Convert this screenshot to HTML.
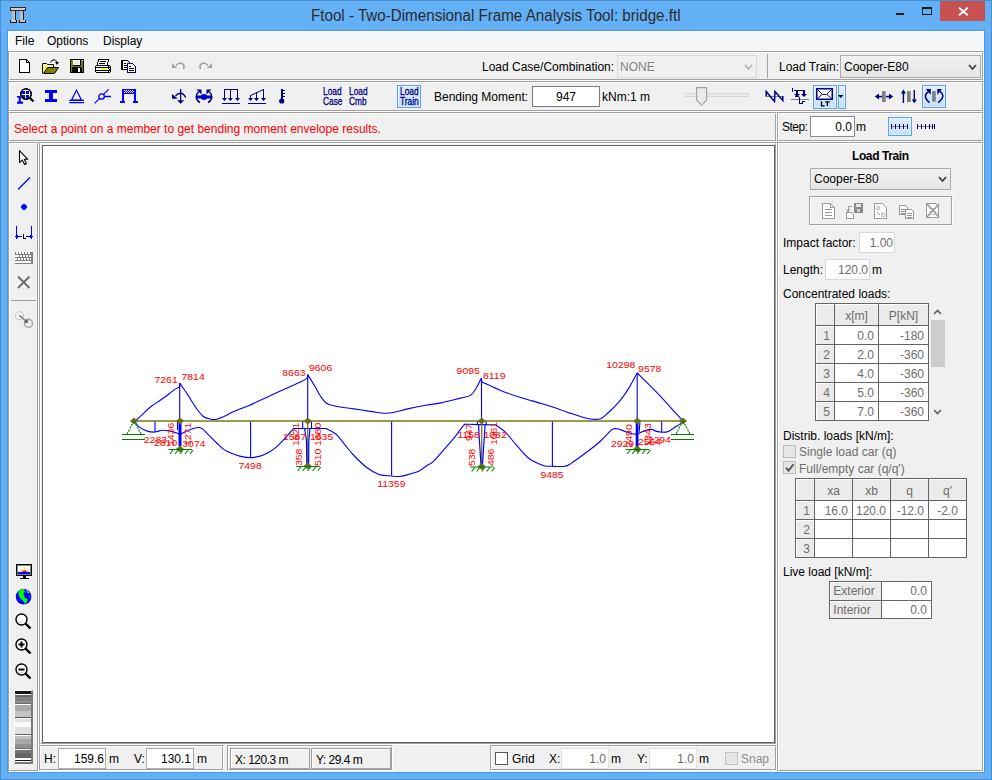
<!DOCTYPE html>
<html><head><meta charset="utf-8">
<style>
*{margin:0;padding:0;box-sizing:border-box}
html,body{width:992px;height:780px;overflow:hidden;background:#64b0f7;font-family:"Liberation Sans",sans-serif;font-size:12px;color:#000}
.a{position:absolute}
.t{position:absolute;white-space:nowrap;line-height:14px}
.e{position:absolute;border-style:solid;border-width:1px;border-color:#a0a0a0 #fff #fff #a0a0a0}
.e>i{position:absolute;left:0;top:0;right:0;bottom:0;border-style:solid;border-width:1px;border-color:#fff #a0a0a0 #a0a0a0 #fff}
.inp{position:absolute;background:#fff;border:1px solid #abadb3;text-align:right;padding-right:3px;line-height:18px}
.dis{color:#8a8a8a}
</style></head><body>
<!-- window frame -->
<div class="a" style="left:0;top:0;width:992px;height:780px;border:1px solid #4b8fd0"></div>
<!-- title -->
<div class="t" style="left:311px;top:7px;font-size:16px;line-height:18px;color:#2b2b2b;transform:scaleX(0.948);transform-origin:0 0">Ftool - Two-Dimensional Frame Analysis Tool: bridge.ftl</div>
<div class="a" style="left:940px;top:1px;width:45px;height:20px;background:#c75050"></div>
<div class="a" style="left:896px;top:13px;width:8px;height:2px;background:#1a1a1a"></div>
<div class="a" style="left:922px;top:7px;width:10px;height:8px;border:1px solid #1a1a1a;border-top-width:2px"></div>
<svg class="a" style="left:958px;top:7px" width="11" height="9"><path d="M1 0.8L9.8 8.2M9.8 0.8L1 8.2" stroke="#fff" stroke-width="1.9"/></svg>

<!-- client area -->
<div class="a" style="left:7px;top:30px;width:978px;height:743px;border:1px solid #5099e0"></div>
<div class="a" style="left:8px;top:31px;width:976px;height:741px;background:#f0f0f0"></div>
<div class="a" style="left:8px;top:31px;width:976px;height:20px;background:#f5f6f7;box-shadow:inset 1px 1px 0 #fff"></div>
<div class="t" style="left:15px;top:34px">File</div>
<div class="t" style="left:47px;top:34px">Options</div>
<div class="t" style="left:103px;top:34px">Display</div>

<!-- panels -->
<div class="e" style="left:8px;top:51px;width:976px;height:30px"><i></i></div>
<div class="e" style="left:8px;top:81px;width:976px;height:31px"><i></i></div>
<div class="e" style="left:8px;top:112px;width:769px;height:30px"><i></i></div>
<div class="e" style="left:777px;top:112px;width:207px;height:30px"><i></i></div>
<div class="e" style="left:8px;top:142px;width:31px;height:630px"><i></i></div>
<div class="e" style="left:39px;top:142px;width:738px;height:603px"><i></i></div>
<div class="e" style="left:39px;top:745px;width:185px;height:26px"><i></i></div>
<div class="e" style="left:227px;top:745px;width:166px;height:26px"><i></i></div>
<div class="e" style="left:490px;top:745px;width:287px;height:26px"><i></i></div>
<div class="e" style="left:777px;top:142px;width:207px;height:630px"><i></i></div>

<!-- canvas -->
<div class="a" style="left:42px;top:145px;width:733px;height:598px;background:#fff;border:1px solid #646464"></div>

<!-- diagram -->
<svg class="a" style="left:0;top:0" width="992" height="780"><path d="M134 421C134.30 420.90 134.48 421.42 135.8 420.4C137.12 419.38 139.47 417.13 141.9 414.9C144.33 412.67 147.35 409.43 150.4 407C153.45 404.57 157.15 402.43 160.2 400.3C163.25 398.17 166.27 396.02 168.7 394.2C171.13 392.38 172.97 390.62 174.8 389.4C176.63 388.18 178.88 387.32 179.7 386.9C179.70 386.30 179.70 383.90 179.7 383.3C179.88 383.52 179.47 382.72 180.8 384.6C182.13 386.48 185.27 390.88 187.7 394.6C190.13 398.32 192.85 403.30 195.4 406.9C197.95 410.50 200.43 414.15 203 416.2C205.57 418.25 208.48 418.70 210.8 419.2C213.12 419.70 214.33 419.83 216.9 419.2C219.47 418.57 223.38 416.68 226.2 415.4C229.02 414.12 229.97 413.17 233.8 411.5C237.63 409.83 243.30 407.95 249.2 405.4C255.10 402.85 262.78 399.15 269.2 396.2C275.62 393.25 282.32 390.15 287.7 387.7C293.08 385.25 298.17 383.17 301.5 381.5C304.83 379.83 306.67 378.33 307.7 377.7C307.70 377.18 307.70 375.12 307.7 374.6C308.82 376.42 312.25 381.88 314.4 385.5C316.55 389.12 318.52 393.30 320.6 396.3C322.68 399.30 324.35 401.85 326.9 403.5C329.45 405.15 331.40 405.30 335.9 406.2C340.40 407.10 347.92 408.00 353.9 408.9C359.88 409.80 366.72 410.87 371.8 411.6C376.88 412.33 380.80 413.15 384.4 413.3C388.00 413.45 389.52 413.23 393.4 412.5C397.28 411.77 402.32 410.10 407.7 408.9C413.08 407.70 420.32 406.27 425.7 405.3C431.08 404.33 436.88 403.65 440 403.1C443.12 402.55 440.98 402.83 444.4 402C447.82 401.17 456.17 399.20 460.5 398.1C464.83 397.00 467.70 397.20 470.4 395.4C473.10 393.60 474.90 390.15 476.7 387.3C478.50 384.45 480.45 379.80 481.2 378.3C481.33 378.92 481.87 381.38 482 382C485.30 383.48 495.50 388.37 501.8 390.9C508.10 393.43 513.22 395.10 519.8 397.2C526.38 399.30 535.32 401.70 541.3 403.5C547.28 405.30 550.92 406.37 555.7 408C560.48 409.63 567.48 412.42 570 413.3C572.52 414.18 567.68 412.40 570.8 413.3C573.92 414.20 583.77 417.80 588.7 418.7C593.63 419.60 597.10 419.73 600.4 418.7C603.70 417.67 605.37 415.33 608.5 412.5C611.63 409.67 615.92 405.60 619.2 401.7C622.48 397.80 625.20 393.88 628.2 389.1C631.20 384.32 635.70 375.68 637.2 373C640.50 376.28 650.42 385.83 657 392.7C663.58 399.57 672.37 409.48 676.7 414.2C681.03 418.92 681.95 419.87 683 421" fill="none" stroke="#0000ff" stroke-width="1.1" stroke-linejoin="round"/>
<path d="M134 421C134.92 422.02 137.17 425.37 139.5 427.1C141.83 428.83 145.37 430.58 148 431.4C150.63 432.22 152.87 432.20 155.3 432C157.73 431.80 159.95 430.30 162.6 430.2C165.25 430.10 168.77 430.90 171.2 431.4C173.63 431.90 175.73 432.68 177.2 433.2C178.67 433.72 179.53 434.28 180 434.5" fill="none" stroke="#0000ff" stroke-width="1.1" stroke-linejoin="round"/>
<path d="M180.8 433.9C182.08 433.30 186.28 431.25 188.5 430.3C190.72 429.35 192.35 428.67 194.1 428.2C195.85 427.73 197.58 427.38 199 427.5C200.42 427.62 201.07 427.72 202.6 428.9C204.13 430.08 205.85 432.25 208.2 434.6C210.55 436.95 214.12 440.53 216.7 443C219.28 445.47 221.12 447.63 223.7 449.4C226.28 451.17 229.37 452.43 232.2 453.6C235.03 454.77 237.63 455.73 240.7 456.4C243.77 457.07 247.55 457.60 250.6 457.6C253.65 457.60 256.18 457.18 259 456.4C261.82 455.62 264.67 454.42 267.5 452.9C270.33 451.38 273.18 449.65 276 447.3C278.82 444.95 281.48 441.93 284.4 438.8C287.32 435.67 291.98 430.22 293.5 428.5C298.92 428.50 320.58 428.50 326 428.5C327.65 429.42 332.75 431.28 335.9 434C339.05 436.72 341.90 441.22 344.9 444.8C347.90 448.38 350.32 451.77 353.9 455.5C357.48 459.23 362.22 464.05 366.4 467.2C370.58 470.35 374.85 472.93 379 474.4C383.15 475.87 387.97 475.65 391.3 476C394.63 476.35 396.52 476.65 399 476.5C401.48 476.35 402.77 476.07 406.2 475.1C409.63 474.13 416.32 472.18 419.6 470.7C422.88 469.22 423.50 467.85 425.9 466.2C428.30 464.55 430.27 464.40 434 460.8C437.73 457.20 444.87 448.50 448.3 444.6C451.73 440.70 452.05 440.62 454.6 437.4C457.15 434.18 461.62 427.48 463.6 425.3C465.58 423.12 466.02 424.47 466.5 424.3C471.38 424.42 490.92 424.88 495.8 425C497.40 426.20 502.00 428.90 505.4 432.2C508.80 435.50 512.32 440.47 516.2 444.8C520.08 449.13 524.22 454.77 528.7 458.2C533.18 461.63 539.22 464.05 543.1 465.4C546.98 466.75 548.42 466.15 552 466.3C555.58 466.45 561.47 466.75 564.6 466.3C567.73 465.85 566.48 466.43 570.8 463.6C575.12 460.77 585.63 452.98 590.5 449.3C595.37 445.62 597.08 444.15 600 441.5C602.92 438.85 605.85 435.48 608 433.4C610.15 431.32 611.15 429.73 612.9 429C614.65 428.27 616.48 428.60 618.5 429C620.52 429.40 622.70 430.60 625 431.4C627.30 432.20 630.30 433.33 632.3 433.8C634.30 434.27 636.22 434.13 637 434.2C637.28 434.07 638.42 433.53 638.7 433.4C639.78 432.93 643.05 431.27 645.2 430.6C647.35 429.93 649.72 429.27 651.6 429.4C653.48 429.53 654.77 430.93 656.5 431.4C658.23 431.87 660.00 432.20 662 432.2C664.00 432.20 666.47 432.15 668.5 431.4C670.53 430.65 672.32 428.92 674.2 427.7C676.08 426.48 678.33 425.15 679.8 424.1C681.27 423.05 682.47 421.85 683 421.4" fill="none" stroke="#0000ff" stroke-width="1.1" stroke-linejoin="round"/>
<line x1="155" y1="421" x2="155" y2="432" stroke="#0000ff" stroke-width="1.1"/>
<line x1="250.6" y1="421" x2="250.6" y2="457" stroke="#0000ff" stroke-width="1.1"/>
<line x1="391.6" y1="421" x2="391.6" y2="475.6" stroke="#0000ff" stroke-width="1.1"/>
<line x1="552.4" y1="421" x2="552.4" y2="466.3" stroke="#0000ff" stroke-width="1.1"/>
<line x1="661.7" y1="421" x2="661.7" y2="432" stroke="#0000ff" stroke-width="1.1"/>
<line x1="179.7" y1="383.3" x2="179.7" y2="421" stroke="#0000ff" stroke-width="1.1"/>
<line x1="307.7" y1="374.6" x2="307.7" y2="421" stroke="#0000ff" stroke-width="1.1"/>
<line x1="481.5" y1="378.3" x2="481.5" y2="421" stroke="#0000ff" stroke-width="1.1"/>
<line x1="637.2" y1="373" x2="637.2" y2="421" stroke="#0000ff" stroke-width="1.1"/>
<line x1="177.5" y1="421" x2="177.5" y2="430" stroke="#0000ff" stroke-width="1.1"/>
<line x1="302.7" y1="421" x2="302.7" y2="428.5" stroke="#0000ff" stroke-width="1.1"/>
<line x1="311.5" y1="421" x2="311.5" y2="428.5" stroke="#0000ff" stroke-width="1.1"/>
<line x1="477.4" y1="421" x2="477.4" y2="425" stroke="#0000ff" stroke-width="1.1"/>
<line x1="486.2" y1="421" x2="486.2" y2="425" stroke="#0000ff" stroke-width="1.1"/>
<polyline points="639.9,421.7 639.2,431.8" fill="none" stroke="#0000ff" stroke-width="1.1" stroke-linejoin="round"/>
<line x1="134" y1="421" x2="683" y2="421" stroke="#7a7a10" stroke-width="1.3"/>
<line x1="180" y1="422" x2="180" y2="446" stroke="#0000ff" stroke-width="3"/>
<line x1="637.1" y1="421" x2="637.1" y2="449" stroke="#0000ff" stroke-width="2.8"/>
<line x1="307.7" y1="421" x2="307.7" y2="466" stroke="#7a7a10" stroke-width="1.3"/>
<line x1="481.7" y1="421" x2="481.7" y2="466.5" stroke="#7a7a10" stroke-width="1.3"/>
<polyline points="304.6,428.5 306.5,441 306.8,466" fill="none" stroke="#0000ff" stroke-width="1.2" stroke-linejoin="round"/>
<polyline points="310,428.5 308.8,441 308.6,466" fill="none" stroke="#0000ff" stroke-width="1.2" stroke-linejoin="round"/>
<polyline points="478.5,425 481,465.5" fill="none" stroke="#0000ff" stroke-width="1.2" stroke-linejoin="round"/>
<polyline points="485.1,425 482.4,465.5" fill="none" stroke="#0000ff" stroke-width="1.2" stroke-linejoin="round"/>
<path d="M130 421L134 417.5L138 421L134 424.5Z" fill="#6e6e14"/>
<path d="M176 421L180 417.5L184 421L180 424.5Z" fill="#6e6e14"/>
<path d="M303.7 421L307.7 417.5L311.7 421L307.7 424.5Z" fill="#6e6e14"/>
<path d="M477.7 421L481.7 417.5L485.7 421L481.7 424.5Z" fill="#6e6e14"/>
<path d="M633.2 421L637.2 417.5L641.2 421L637.2 424.5Z" fill="#6e6e14"/>
<path d="M679 421L683 417.5L687 421L683 424.5Z" fill="#6e6e14"/>
<path d="M176 449L180 445.5L184 449L180 452.5Z" fill="#6e6e14"/>
<path d="M303.7 466L307.7 462.5L311.7 466L307.7 469.5Z" fill="#6e6e14"/>
<path d="M477.7 466.5L481.7 463.0L485.7 466.5L481.7 470.0Z" fill="#6e6e14"/>
<path d="M633.2 449L637.2 445.5L641.2 449L637.2 452.5Z" fill="#6e6e14"/>
<path d="M134 421L127 434M134 421L141 434" stroke="#008000" stroke-width="1.1" stroke-dasharray="2.2 1" fill="none"/>
<path d="M122 434.5H145M122 439.5H145" stroke="#008000" stroke-width="1.1"/>
<path d="M683 421L676 434M683 421L690 434" stroke="#008000" stroke-width="1.1" stroke-dasharray="2.2 1" fill="none"/>
<path d="M671 434.5H694M671 439.5H694" stroke="#008000" stroke-width="1.1"/>
<path d="M168.5 449.5H192M173 450L170 454M178 450L175 454M183 450L180 454M188 450L185 454M193 450L190 454" stroke="#008000" stroke-width="1.1" fill="none"/>
<path d="M296.2 466.5H319.7M300.7 467L297.7 471M305.7 467L302.7 471M310.7 467L307.7 471M315.7 467L312.7 471M320.7 467L317.7 471" stroke="#008000" stroke-width="1.1" fill="none"/>
<path d="M470.2 467.0H493.7M474.7 467.5L471.7 471.5M479.7 467.5L476.7 471.5M484.7 467.5L481.7 471.5M489.7 467.5L486.7 471.5M494.7 467.5L491.7 471.5" stroke="#008000" stroke-width="1.1" fill="none"/>
<path d="M625.7 449.5H649.2M630.2 450L627.2 454M635.2 450L632.2 454M640.2 450L637.2 454M645.2 450L642.2 454M650.2 450L647.2 454" stroke="#008000" stroke-width="1.1" fill="none"/>
<text transform="translate(154.5,383) scale(1.1,1)" fill="#ff0000" font-size="9.5" font-family="Liberation Sans">7261</text>
<text transform="translate(181.5,379.8) scale(1.1,1)" fill="#ff0000" font-size="9.5" font-family="Liberation Sans">7814</text>
<text transform="translate(143.8,443) scale(1.1,1)" fill="#ff0000" font-size="9.5" font-family="Liberation Sans">2283</text>
<text transform="translate(154,446.2) scale(1.1,1)" fill="#ff0000" font-size="9.5" font-family="Liberation Sans">2810</text>
<text transform="translate(182.3,447) scale(1.1,1)" fill="#ff0000" font-size="9.5" font-family="Liberation Sans">3074</text>
<text transform="translate(238.5,469.2) scale(1.1,1)" fill="#ff0000" font-size="9.5" font-family="Liberation Sans">7498</text>
<text transform="translate(282.3,376.2) scale(1.1,1)" fill="#ff0000" font-size="9.5" font-family="Liberation Sans">8663</text>
<text transform="translate(309,371) scale(1.1,1)" fill="#ff0000" font-size="9.5" font-family="Liberation Sans">9606</text>
<text transform="translate(283,439.8) scale(1.1,1)" fill="#ff0000" font-size="9.5" font-family="Liberation Sans">1587</text>
<text transform="translate(310,439.8) scale(1.1,1)" fill="#ff0000" font-size="9.5" font-family="Liberation Sans">1635</text>
<text transform="translate(377.2,487) scale(1.1,1)" fill="#ff0000" font-size="9.5" font-family="Liberation Sans">11359</text>
<text transform="translate(456.6,373.5) scale(1.1,1)" fill="#ff0000" font-size="9.5" font-family="Liberation Sans">9095</text>
<text transform="translate(483,378.9) scale(1.1,1)" fill="#ff0000" font-size="9.5" font-family="Liberation Sans">8119</text>
<text transform="translate(457.4,437.8) scale(1.1,1)" fill="#ff0000" font-size="9.5" font-family="Liberation Sans">1158</text>
<text transform="translate(483.5,437.8) scale(1.1,1)" fill="#ff0000" font-size="9.5" font-family="Liberation Sans">1082</text>
<text transform="translate(540.4,478) scale(1.1,1)" fill="#ff0000" font-size="9.5" font-family="Liberation Sans">9485</text>
<text transform="translate(606.3,368) scale(1.1,1)" fill="#ff0000" font-size="9.5" font-family="Liberation Sans">10298</text>
<text transform="translate(638.1,372) scale(1.1,1)" fill="#ff0000" font-size="9.5" font-family="Liberation Sans">9578</text>
<text transform="translate(647.6,442.8) scale(1.1,1)" fill="#ff0000" font-size="9.5" font-family="Liberation Sans">2294</text>
<text transform="translate(610.9,446.8) scale(1.1,1)" fill="#ff0000" font-size="9.5" font-family="Liberation Sans">2929</text>
<text transform="translate(637.9,444.8) scale(1.1,1)" fill="#ff0000" font-size="9.5" font-family="Liberation Sans">2564</text>
<text transform="translate(173.8,446) rotate(-90) scale(1.1,1)" fill="#ff0000" font-size="9.5" font-family="Liberation Sans">1436</text>
<text transform="translate(191,446) rotate(-90) scale(1.1,1)" fill="#ff0000" font-size="9.5" font-family="Liberation Sans">1271</text>
<text transform="translate(298.8,446) rotate(-90) scale(1.1,1)" fill="#ff0000" font-size="9.5" font-family="Liberation Sans">1621</text>
<text transform="translate(320.8,446) rotate(-90) scale(1.1,1)" fill="#ff0000" font-size="9.5" font-family="Liberation Sans">1680</text>
<text transform="translate(302,466) rotate(-90) scale(1.1,1)" fill="#ff0000" font-size="9.5" font-family="Liberation Sans">358</text>
<text transform="translate(320.8,466) rotate(-90) scale(1.1,1)" fill="#ff0000" font-size="9.5" font-family="Liberation Sans">510</text>
<text transform="translate(472.4,441) rotate(-90) scale(1.1,1)" fill="#ff0000" font-size="9.5" font-family="Liberation Sans">947</text>
<text transform="translate(497,445) rotate(-90) scale(1.1,1)" fill="#ff0000" font-size="9.5" font-family="Liberation Sans">1061</text>
<text transform="translate(475,466) rotate(-90) scale(1.1,1)" fill="#ff0000" font-size="9.5" font-family="Liberation Sans">538</text>
<text transform="translate(494,466) rotate(-90) scale(1.1,1)" fill="#ff0000" font-size="9.5" font-family="Liberation Sans">486</text>
<text transform="translate(631.9,447.5) rotate(-90) scale(1.1,1)" fill="#ff0000" font-size="9.5" font-family="Liberation Sans">2490</text>
<text transform="translate(651.2,446.5) rotate(-90) scale(1.1,1)" fill="#ff0000" font-size="9.5" font-family="Liberation Sans">1343</text></svg>
<!-- message -->
<div class="t" style="left:14px;top:122px;color:#f00">Select a point on a member to get bending moment envelope results.</div>

<!-- toolbar1 text -->
<div class="t" style="left:482px;top:60px">Load Case/Combination:</div>
<div class="t" style="left:779px;top:60px">Load Train:</div>
<div class="t" style="left:434px;top:90px">Bending Moment:</div>
<div class="t" style="left:602px;top:90px">kNm:1 m</div>
<div class="t" style="left:782px;top:120px;letter-spacing:-0.5px">Step:</div>


<!-- toolbar1 icons -->
<svg class="a" style="left:18px;top:58px" width="14" height="16" shape-rendering="crispEdges">
<path d="M1.5 1.5H8.5L11.5 4.5V14.5H1.5Z" fill="#fff" stroke="#000" stroke-width="1.3"/><path d="M8.5 1.5V4.5H11.5" fill="none" stroke="#000"/></svg>
<svg class="a" style="left:42px;top:59px" width="17" height="15">
<defs><pattern id="chk" width="2" height="2" patternUnits="userSpaceOnUse"><rect width="2" height="2" fill="#fff"/><rect width="1" height="1" fill="#ff0"/><rect x="1" y="1" width="1" height="1" fill="#ff0"/></pattern></defs>
<path d="M1 5H4L5 6H11V9H6L2 14H1Z" fill="url(#chk)"/>
<path d="M0.5 14.5V4.5H4.5L5.5 5.5H11.5V8.5" fill="none" stroke="#000"/>
<path d="M1.5 14.5L5.5 8.5H16.5L12.5 14.5Z" fill="#808000" stroke="#000"/>
<path d="M8.5 3.5Q9.5 0.5 12 0.8Q14 1 15 3" fill="none" stroke="#000"/>
<path d="M13 3H17L15 6Z" fill="#000"/></svg>
<svg class="a" style="left:70px;top:59px" width="15" height="15" shape-rendering="crispEdges">
<rect x="0" y="0" width="14" height="14" fill="#000"/><rect x="1" y="1" width="12" height="12" fill="#808000"/>
<rect x="3" y="1" width="8" height="6" fill="#000"/><rect x="3" y="1" width="7" height="5" fill="#fff"/><rect x="4" y="2" width="5" height="3" fill="#e8e8e8"/>
<rect x="12" y="1" width="1" height="1" fill="#fff"/>
<rect x="2" y="8" width="10" height="6" fill="#000"/><rect x="8" y="9" width="2" height="4" fill="#fff"/></svg>
<svg class="a" style="left:95px;top:59px" width="17" height="15" shape-rendering="crispEdges">
<path d="M3.5 0.5H13.5L12.5 6.5H2.5Z" fill="#fff" stroke="#000"/>
<rect x="5" y="2" width="6" height="1" fill="#000"/><rect x="4" y="4" width="6" height="1" fill="#000"/>
<path d="M1.5 6.5H14.5L15.5 7.5V12.5L14.5 13.5H1.5L0.5 12.5V7.5Z" fill="#fff" stroke="#000"/>
<rect x="1" y="8" width="14" height="1" fill="#000"/><rect x="1" y="11" width="14" height="1" fill="#000"/>
<rect x="7" y="9" width="3" height="2" fill="#ff0"/>
<path d="M13 7h1v1h-1zM14 8h1v1h-1zM13 9h1v1h-1zM14 10h1v1h-1zM13 12h1v1h-1z" fill="#000"/></svg>
<svg class="a" style="left:121px;top:60px" width="16" height="14" shape-rendering="crispEdges">
<path d="M0.5 0.5H6.5L8.5 2.5V9.5H0.5Z" fill="#fff" stroke="#000"/><rect x="0" y="0" width="2" height="10" fill="#000"/>
<path d="M3 3H5M3 5H6M3 7H6" stroke="#000"/>
<path d="M6.5 3.5H11.5L14.5 6.5V12.5H6.5Z" fill="#fff" stroke="#000080"/><rect x="6" y="3" width="1" height="10" fill="#000080"/><rect x="6" y="12" width="9" height="1" fill="#000080"/>
<path d="M8 6H10M8 8H13M8 10H13" stroke="#000"/></svg>
<svg class="a" style="left:172px;top:61px" width="14" height="9">
<path d="M4 4.5Q7 1 10 2.5Q13 4 11.5 8" fill="none" stroke="#a0a0a0" stroke-width="1.5"/><path d="M0 2V7H5Z" fill="#a0a0a0"/></svg>
<svg class="a" style="left:198px;top:61px" width="14" height="9">
<path d="M10 4.5Q7 1 4 2.5Q1 4 2.5 8" fill="none" stroke="#a0a0a0" stroke-width="1.5"/><path d="M14 2V7H9Z" fill="#a0a0a0"/></svg>

<!-- combo NONE -->
<div class="a" style="left:617px;top:55px;width:140px;height:23px;background:#f0f0f0;border:1px solid #d9d9d9"></div>
<div class="t" style="left:620px;top:60px;color:#838383">NONE</div>
<svg class="a" style="left:744px;top:64px" width="9" height="7"><path d="M1 1L4.5 5L8 1" fill="none" stroke="#b5b5b5" stroke-width="1.6"/></svg>
<div class="a" style="left:767px;top:54px;width:1px;height:24px;background:#a0a0a0"></div>

<!-- combo Cooper -->
<div class="a" style="left:840px;top:55px;width:141px;height:23px;background:linear-gradient(#f2f2f2,#e5e5e5);border:1px solid #acacac"></div>
<div class="t" style="left:844px;top:60px">Cooper-E80</div>
<svg class="a" style="left:968px;top:64px" width="9" height="7"><path d="M1 1L4.5 5L8 1" fill="none" stroke="#404040" stroke-width="1.8"/></svg>

<!-- title icon -->
<svg class="a" style="left:10px;top:7px" width="17" height="17" shape-rendering="crispEdges">
<rect x="0" y="0" width="16" height="4" fill="#2a2a2a"/><rect x="1" y="1" width="14" height="2" fill="#cfcfcf"/>
<rect x="2" y="4" width="4" height="12" fill="#222"/><rect x="2" y="4" width="3" height="11" fill="#bdbdbd"/>
<rect x="10" y="4" width="4" height="12" fill="#222"/><rect x="10" y="4" width="3" height="11" fill="#bdbdbd"/>
<rect x="0" y="13" width="7" height="3" fill="#1a1a1a"/><rect x="1" y="13" width="5" height="2" fill="#c5c5c5"/>
<rect x="9" y="13" width="7" height="3" fill="#1a1a1a"/><rect x="10" y="13" width="5" height="2" fill="#c5c5c5"/></svg>

<!-- toolbar2 icons -->
<svg class="a" style="left:16px;top:88px" width="19" height="17">
<rect x="1" y="8" width="3.5" height="1.6" fill="#0000ff"/><rect x="2.7" y="9" width="2.1" height="5" fill="#0000ff"/><rect x="1" y="13.6" width="6" height="2.2" fill="#0000ff"/>
<circle cx="10" cy="6" r="5.2" fill="#0000ff" stroke="#000" stroke-width="1.3"/>
<path d="M9.5 0.5V11M5 6.5H15M13.5 1.5V10.5M5 2.5H15" stroke="#fff" stroke-width="1.1" fill="none" shape-rendering="crispEdges"/>
<circle cx="10" cy="6" r="5.2" fill="none" stroke="#000" stroke-width="1.3"/>
<path d="M13.5 9.5L17.5 13.5" stroke="#000" stroke-width="2.3"/></svg>
<svg class="a" style="left:45px;top:90px" width="13" height="13" shape-rendering="crispEdges">
<rect x="0" y="0" width="12" height="3" fill="#0000ff"/><rect x="4" y="0" width="4" height="12" fill="#0000ff"/><rect x="0" y="9" width="12" height="3" fill="#0000ff"/></svg>
<svg class="a" style="left:68px;top:89px" width="17" height="15">
<path d="M8.5 1.3L3.6 11H13.4Z" fill="none" stroke="#0000ff" stroke-width="1.2" stroke-linejoin="miter"/><path d="M1.2 11.4H16M1.2 13.6H16" stroke="#0000ff" stroke-width="1.3"/></svg>
<svg class="a" style="left:94px;top:89px" width="18" height="16">
<path d="M0.6 14.4L5.6 9.4M9.6 5.4L14.6 0.4M10 7.5H17" stroke="#0000ff" stroke-width="1.3"/><circle cx="7.6" cy="7.5" r="2.7" fill="none" stroke="#0000ff" stroke-width="1.3"/></svg>
<svg class="a" style="left:120px;top:89px" width="18" height="15" shape-rendering="crispEdges">
<defs><pattern id="bchk" width="2" height="2" patternUnits="userSpaceOnUse"><rect width="2" height="2" fill="#fff"/><rect width="1" height="1" fill="#0000ff"/><rect x="1" y="1" width="1" height="1" fill="#0000ff"/></pattern></defs>
<rect x="2" y="0" width="14" height="1" fill="#0000ff"/><rect x="2" y="1" width="14" height="3" fill="url(#bchk)"/><rect x="2" y="4" width="14" height="1" fill="#0000ff"/>
<rect x="2" y="0" width="2" height="14" fill="#0000ff"/><rect x="14" y="0" width="2" height="14" fill="#0000ff"/>
<rect x="0" y="12" width="5" height="2" fill="#0000ff"/><rect x="13" y="12" width="5" height="2" fill="#0000ff"/></svg>

<svg class="a" style="left:171px;top:88px" width="16" height="17">
<path d="M9.6 1V13" stroke="#000080" stroke-width="1.3"/><path d="M6 12.2H13.2L9.6 15.8Z" fill="#000080"/>
<path d="M14.7 9.5Q12.8 5.4 9.6 5.3Q6.4 5.3 4.5 8" fill="none" stroke="#000080" stroke-width="1.4"/><path d="M1 6V10.8H6.8Z" fill="#000080"/></svg>
<svg class="a" style="left:195px;top:89px" width="19" height="15">
<path d="M3.5 3Q0.5 6 1.5 9.5Q2.5 12.5 5 13.5M14.5 3Q17.5 6 16.5 9.5Q15.5 12.5 13 13.5" fill="none" stroke="#000080" stroke-width="1.5"/>
<path d="M1.5 0.5H6.5V5.5Z M16.5 0.5H11.5V5.5Z" fill="#000080"/>
<path d="M1 8H17" stroke="#000080" stroke-width="3"/><path d="M1.5 8H16.5" stroke="#0000ff" stroke-width="1.6"/><ellipse cx="9" cy="8" rx="3" ry="2.7" fill="#0000ff" stroke="#000080" stroke-width="0.6"/></svg>
<svg class="a" style="left:222px;top:89px" width="18" height="16" shape-rendering="crispEdges">
<rect x="2" y="0" width="14" height="1" fill="#000080"/>
<rect x="2" y="0" width="1" height="11" fill="#000080"/><rect x="8" y="0" width="1" height="11" fill="#000080"/><rect x="15" y="0" width="1" height="11" fill="#000080"/>
<path d="M0 9H5L2.5 12Z M6 9H11L8.5 12Z M13 9H18L15.5 12Z" fill="#000080" shape-rendering="auto"/>
<rect x="0" y="14" width="18" height="1" fill="#000080"/></svg>
<svg class="a" style="left:248px;top:89px" width="18" height="16" shape-rendering="crispEdges">
<path d="M2.5 6.5L15.5 0.5" stroke="#000080" shape-rendering="auto"/>
<rect x="2" y="6" width="1" height="5" fill="#000080"/><rect x="8" y="3" width="1" height="8" fill="#000080"/><rect x="15" y="0" width="1" height="11" fill="#000080"/>
<path d="M0 9H5L2.5 12Z M6 9H11L8.5 12Z M13 9H18L15.5 12Z" fill="#000080" shape-rendering="auto"/>
<rect x="0" y="14" width="18" height="1" fill="#000080"/></svg>
<svg class="a" style="left:279px;top:89px" width="9" height="15" shape-rendering="crispEdges">
<rect x="2" y="0" width="1.5" height="11" fill="#000080"/><rect x="3" y="1" width="3" height="1" fill="#000080"/><rect x="3" y="4" width="3" height="1" fill="#000080"/><rect x="3" y="7" width="3" height="1" fill="#000080"/>
<circle cx="2.7" cy="12" r="2.6" fill="#000080" shape-rendering="auto"/></svg>

<div class="a" style="left:323px;top:87px;width:22px;font-size:11px;line-height:9.5px;color:#000080;-webkit-text-stroke:0.3px #000080;transform:scaleX(0.76);transform-origin:0 0">Load<br>Case</div>
<div class="a" style="left:349px;top:87px;width:22px;font-size:11px;line-height:9.5px;color:#000080;-webkit-text-stroke:0.3px #000080;transform:scaleX(0.76);transform-origin:0 0">Load<br>Cmb</div>
<div class="a" style="left:397px;top:85px;width:24px;height:23px;background:linear-gradient(#ddedfc,#c5e0fb);border:1px solid #5ba3ea;box-shadow:inset 0 0 0 1px rgba(255,255,255,0.35)"></div>
<div class="a" style="left:400px;top:87px;width:22px;font-size:11px;line-height:9.5px;color:#000080;-webkit-text-stroke:0.3px #000080;transform:scaleX(0.76);transform-origin:0 0">Load<br>Train</div>

<div class="a" style="left:532px;top:86px;width:68px;height:21px;background:#fff;border:1px solid #7a7a7a"></div>
<div class="t" style="left:532px;top:90px;width:68px;text-align:center">947</div>
<!-- slider -->
<div class="a" style="left:685px;top:93px;width:64px;height:4px;background:#e7eaea;border:1px solid #d6d6d6"></div>
<svg class="a" style="left:696px;top:87px" width="12" height="20"><path d="M0.6 0.6H10.6V13L5.6 18.3L0.6 13Z" fill="#ebebeb" stroke="#a0a0a0" stroke-width="1.1"/></svg>

<!-- right icons -->
<svg class="a" style="left:765px;top:90px" width="19" height="13">
<path d="M0 6.5H18" stroke="#808080"/>
<path d="M1.2 6L1.2 1.5L9.5 11.5L10 1.5L17.8 10.5V6" fill="none" stroke="#000080" stroke-width="1.5"/></svg>
<svg class="a" style="left:791px;top:88px" width="19" height="17" shape-rendering="crispEdges">
<rect x="3" y="2" width="11" height="1" fill="#000080"/><rect x="1" y="0" width="1" height="4" fill="#000080"/>
<rect x="5" y="2" width="2" height="6" fill="#000080"/><rect x="12" y="2" width="2" height="6" fill="#000080"/>
<path d="M3 6H9L6 9Z M10 6H16L13 9Z" fill="#000080" shape-rendering="auto"/>
<rect x="0" y="11" width="18" height="1" fill="#808080"/>
<path d="M4 8L8 9V15H11V13H14" fill="none" stroke="#000080"/></svg>
<div class="a" style="left:813px;top:85px;width:24px;height:24px;background:linear-gradient(#ddedfc,#c5e0fb);border:1px solid #5ba3ea;box-shadow:inset 0 0 0 1px rgba(255,255,255,0.35)"></div>
<div class="a" style="left:838px;top:85px;width:8px;height:24px;background:linear-gradient(#ddedfc,#c5e0fb);border:1px solid #5ba3ea;box-shadow:inset 0 0 0 1px rgba(255,255,255,0.35)"></div>
<svg class="a" style="left:838px;top:95px" width="6" height="4"><path d="M0 0H5.5L2.75 3Z" fill="#000"/></svg>
<svg class="a" style="left:815px;top:87px" width="19" height="20">
<rect x="1.75" y="1.75" width="15.5" height="10.5" fill="#fff" stroke="#000080" stroke-width="1.5"/>
<path d="M2.5 2.5L7.5 7.5H11.5L16.5 2.5M2.5 11.5L7 7.5M16.5 11.5L12 7.5" fill="none" stroke="#000080" stroke-width="1"/>
<path d="M6.5 14.3V18.8H9.6M10.2 14.9H14.6M12.4 14.9V19" fill="none" stroke="#000" stroke-width="1.35"/></svg>

<svg class="a" style="left:874px;top:90px" width="20" height="13">
<path d="M0.8 6.5L5 3.6V9.4Z M19.2 6.5L15 3.6V9.4Z" fill="#000080"/><rect x="4" y="5.8" width="4" height="1.6" fill="#000080"/><rect x="12" y="5.8" width="4" height="1.6" fill="#000080"/>
<rect x="8" y="1" width="3.7" height="11" fill="#808080"/></svg>
<svg class="a" style="left:900px;top:89px" width="19" height="15">
<rect x="2.7" y="2" width="1.4" height="12" fill="#000080"/><path d="M0.8 4.5L3.4 0.5L6 4.5Z" fill="#000080"/>
<rect x="7" y="2" width="3.7" height="11" fill="#808080"/>
<rect x="13.6" y="1" width="1.4" height="12" fill="#000080"/><path d="M11.7 10.5L14.3 14.3L16.9 10.5Z" fill="#000080"/></svg>
<div class="a" style="left:922px;top:85px;width:24px;height:23px;background:linear-gradient(#ddedfc,#c5e0fb);border:1px solid #5ba3ea;box-shadow:inset 0 0 0 1px rgba(255,255,255,0.35)"></div>
<svg class="a" style="left:924px;top:88px" width="20" height="16">
<path d="M4.8 3.3Q-2.35 7.85 5.5 14.6M15.9 3.3Q22.6 7.85 14.1 14.6" fill="none" stroke="#000080" stroke-width="1.5"/>
<path d="M1.9 1H6.9L6.6 6.7Z M13.3 1H17.9L13.4 6.7Z" fill="#000080"/>
<rect x="8.1" y="3.2" width="3.7" height="10.4" fill="#808080"/></svg>

<!-- step row -->
<div class="a" style="left:810px;top:116px;width:45px;height:21px;background:#fff;border:1px solid #8c8c8c"></div>
<div class="t" style="left:810px;top:120px;width:42px;text-align:right">0.0</div>
<div class="t" style="left:856px;top:120px">m</div>
<div class="a" style="left:888px;top:117px;width:24px;height:19px;background:linear-gradient(#ddedfc,#c5e0fb);border:1px solid #5ba3ea;box-shadow:inset 0 0 0 1px rgba(255,255,255,0.35)"></div>
<svg class="a" style="left:891px;top:123px" width="48" height="7" shape-rendering="crispEdges">
<rect x="0" y="3" width="17" height="1" fill="#808080"/>
<rect x="0" y="1" width="1.3" height="5" fill="#000080"/><rect x="4" y="1" width="1.3" height="5" fill="#000080"/><rect x="8" y="1" width="1.3" height="5" fill="#000080"/><rect x="12" y="1" width="1.3" height="5" fill="#000080"/><rect x="16" y="1" width="1.3" height="5" fill="#000080"/>
<rect x="26" y="3" width="17" height="1" fill="#808080"/>
<rect x="26" y="1" width="1.3" height="5" fill="#000080"/><rect x="30" y="1" width="1.3" height="5" fill="#000080"/><rect x="34" y="1" width="1.3" height="5" fill="#000080"/><rect x="38" y="1" width="1.3" height="5" fill="#000080"/><rect x="41" y="1" width="1.3" height="5" fill="#000080"/><rect x="43" y="1" width="1.3" height="5" fill="#000080"/></svg>

<!-- left toolbar -->
<svg class="a" style="left:18px;top:149px" width="12" height="18">
<path d="M1.5 1.6V13.6L4.3 11L6.6 15.6L8.4 14.7L6.3 10.3H9.8Z" fill="#fff" stroke="#000" stroke-width="1.1" stroke-linejoin="round"/></svg>
<svg class="a" style="left:17px;top:176px" width="14" height="15"><path d="M1 13.5L13 1.5" stroke="#0000ff" stroke-width="1.2"/></svg>
<svg class="a" style="left:20px;top:203px" width="8" height="8"><path d="M4 0.5L7.5 4L4 7.5L0.5 4Z" fill="#0000ff"/><rect x="1.8" y="1.8" width="4.4" height="4.4" fill="#0000ff"/></svg>
<svg class="a" style="left:14px;top:225px" width="20" height="15" shape-rendering="crispEdges">
<rect x="2" y="1" width="1" height="13" fill="#0000ff"/><rect x="17" y="1" width="1" height="13" fill="#0000ff"/>
<rect x="1" y="11" width="7" height="1" fill="#0000ff"/><rect x="12" y="11" width="7" height="1" fill="#0000ff"/>
<rect x="3" y="10" width="1" height="3" fill="#0000ff"/><rect x="16" y="10" width="1" height="3" fill="#0000ff"/>
<rect x="9" y="9" width="1.4" height="5" fill="#000"/><rect x="9" y="12.6" width="3.2" height="1.4" fill="#000"/></svg>
<svg class="a" style="left:15px;top:252px" width="18" height="12" shape-rendering="crispEdges">
<rect x="0" y="0" width="18" height="12" fill="#808080"/>
<path d="M1 0h2v2h-2zM4 0h2v2h-2zM7 0h2v2h-2zM10 0h2v2h-2zM13 0h2v2h-2zM0 3h4v2h-4zM5 3h2v2h-2zM8 3h2v2h-2zM11 3h2v2h-2zM14 3h2v2h-2zM0 6h2v2h-2zM3 6h2v2h-2zM6 6h2v2h-2zM9 6h2v2h-2zM12 6h2v2h-2zM15 6h1v2h-1zM0 9h17v1.6h-17z" fill="#fff"/>
<rect x="16" y="0" width="2" height="12" fill="#808080"/></svg>
<svg class="a" style="left:16px;top:275px" width="16" height="15"><path d="M2 1.5L13.5 13M13.5 1.5L2 13" stroke="#6a6a6a" stroke-width="1.8"/></svg>
<div class="a" style="left:11px;top:300px;width:25px;height:1px;background:#a0a0a0"></div>
<svg class="a" style="left:15px;top:311px" width="19" height="18">
<circle cx="4.4" cy="4.6" r="4" fill="none" stroke="#8a8a8a" stroke-width="1" stroke-dasharray="1 1.6"/>
<circle cx="13.5" cy="12.4" r="4" fill="none" stroke="#ababab" stroke-width="1.6"/>
<path d="M4.5 4.5L11.5 10.5" stroke="#6a6a6a" stroke-width="1.3"/><path d="M13.2 12.2L8.6 11.6L12.6 7.8Z" fill="#6a6a6a"/></svg>

<svg class="a" style="left:16px;top:564px" width="17" height="16" shape-rendering="crispEdges">
<rect x="0" y="0" width="16" height="12" fill="#000"/><rect x="1" y="1" width="14" height="10" fill="#808080"/><rect x="2" y="2" width="12" height="8" fill="#fff"/>
<rect x="2" y="8" width="12" height="2" fill="#0000ff"/><path d="M5.5 8Q8.5 4.5 11.5 8Z" fill="#ff0000" shape-rendering="auto"/>
<path d="M4.5 5.5L6 7M12.5 5.5L11 7M8.5 3.5V5" stroke="#ffd800" stroke-width="1.2" shape-rendering="auto"/>
<rect x="7" y="12" width="3" height="2" fill="#000"/><rect x="4" y="14" width="9" height="1.3" fill="#000"/></svg>
<svg class="a" style="left:15px;top:588px" width="17" height="17">
<circle cx="8.6" cy="8.7" r="7.8" fill="#0000ff"/>
<path d="M3.5 3Q6 1 9 1.3Q10 3 9.5 4.5Q8 5 8.5 6.5Q10 8 9.5 9.5Q11 10 12.5 11Q13 13 11.5 14.5Q10.5 16 9.5 15.5Q9 13 7.5 12Q5 11 4.5 9Q3 7 3.5 3Z" fill="#00ff00"/>
<path d="M11 2Q13.5 3 14.5 5Q13 6 12 4.5Z M14 7Q15.5 8 15.5 10Q14.5 9.5 14 7Z" fill="#00ff00"/></svg>
<svg class="a" style="left:15px;top:613px" width="17" height="17">
<circle cx="6.5" cy="6.5" r="5.5" fill="#fff" stroke="#000" stroke-width="1.4"/><path d="M4 9Q6 10 8 8" fill="none" stroke="#c0c0c0"/><path d="M10.5 10.5L15.5 15.5" stroke="#000" stroke-width="2.4"/></svg>
<svg class="a" style="left:15px;top:638px" width="17" height="17">
<circle cx="6.5" cy="6.5" r="5.5" fill="#fff" stroke="#000" stroke-width="1.4"/><path d="M3.5 6.5H9.5M6.5 3.5V9.5" stroke="#000" stroke-width="2"/><path d="M10.5 10.5L15.5 15.5" stroke="#000" stroke-width="2.4"/></svg>
<svg class="a" style="left:15px;top:663px" width="17" height="17">
<circle cx="6.5" cy="6.5" r="5.5" fill="#fff" stroke="#000" stroke-width="1.4"/><path d="M3.5 6.5H9.5" stroke="#000" stroke-width="2"/><path d="M4 9.5Q6 10.5 8 9.5" fill="none" stroke="#c0c0c0"/><path d="M10.5 10.5L15.5 15.5" stroke="#000" stroke-width="2.4"/></svg>

<!-- color scale -->
<div class="a" style="left:14px;top:690px;width:19px;height:74px;border-style:solid;border-width:1px 2px 2px 1px;border-color:#fff #7a7a7a #7a7a7a #fff;background:#fff"></div>
<div class="a" style="left:15px;top:690.6px;width:16px;height:3.1px;background:#151515"></div>
<div class="a" style="left:15px;top:693.7px;width:16px;height:1.3px;background:#fff"></div>
<div class="a" style="left:15px;top:695px;width:16px;height:2.3px;background:#686868"></div>
<div class="a" style="left:15px;top:697.3px;width:16px;height:3.6px;background:#808080"></div>
<div class="a" style="left:15px;top:700.9px;width:16px;height:2.1px;background:#909090"></div>
<div class="a" style="left:15px;top:703px;width:16px;height:1px;background:#6a6a6a"></div>
<div class="a" style="left:15px;top:704px;width:16px;height:1px;background:#fff"></div>
<div class="a" style="left:15px;top:705px;width:16px;height:5.6px;background:#a8a8a8"></div>
<div class="a" style="left:15px;top:710.6px;width:16px;height:6.2px;background:#c4c4c4"></div>
<div class="a" style="left:15px;top:716.8px;width:16px;height:1.2px;background:#555"></div>
<div class="a" style="left:15px;top:718px;width:16px;height:1px;background:#fff"></div>
<div class="a" style="left:15px;top:719px;width:16px;height:2.9px;background:#e2e2e2"></div>
<div class="a" style="left:15px;top:721.9px;width:16px;height:5.1px;background:#fafafa"></div>
<div class="a" style="left:15px;top:727px;width:16px;height:6.7px;background:#e0e0e0"></div>
<div class="a" style="left:15px;top:733.7px;width:16px;height:1.0px;background:#666"></div>
<div class="a" style="left:15px;top:734.7px;width:16px;height:1.3px;background:#fff"></div>
<div class="a" style="left:15px;top:736px;width:16px;height:3.3px;background:#c0c0c0"></div>
<div class="a" style="left:15px;top:739.3px;width:16px;height:4.7px;background:#a8a8a8"></div>
<div class="a" style="left:15px;top:744px;width:16px;height:4px;background:#909090"></div>
<div class="a" style="left:15px;top:748px;width:16px;height:1px;background:#6c6c6c"></div>
<div class="a" style="left:15px;top:749px;width:16px;height:1px;background:#fff"></div>
<div class="a" style="left:15px;top:750px;width:16px;height:3.2px;background:#737373"></div>
<div class="a" style="left:15px;top:753.2px;width:16px;height:5.1px;background:#636363"></div>
<div class="a" style="left:15px;top:758.3px;width:16px;height:1.5px;background:#fff"></div>
<div class="a" style="left:15px;top:759.8px;width:16px;height:1.6px;background:#151515"></div>

<!-- status bar -->
<div class="t" style="left:44px;top:752px">H:</div>
<div class="a" style="left:58px;top:748px;width:48px;height:21px;background:#fff;border:1px solid #ababab"></div>
<div class="t" style="left:58px;top:752px;width:46px;text-align:right;padding-right:0">159.6</div>
<div class="t" style="left:109px;top:752px">m</div>
<div class="t" style="left:134px;top:752px">V:</div>
<div class="a" style="left:146px;top:748px;width:48px;height:21px;background:#fff;border:1px solid #ababab"></div>
<div class="t" style="left:147px;top:752px;width:45px;text-align:right;padding-right:1px">130.1</div>
<div class="t" style="left:197px;top:752px">m</div>
<div class="a" style="left:230px;top:748px;width:80px;height:21px;border:1px solid #a0a0a0;box-shadow:inset 1px 1px 0 #fff"></div>
<div class="t" style="left:235px;top:753px;letter-spacing:-0.5px">X: 120.3 m</div>
<div class="a" style="left:311px;top:748px;width:80px;height:21px;border:1px solid #a0a0a0;box-shadow:inset 1px 1px 0 #fff"></div>
<div class="t" style="left:316px;top:753px;letter-spacing:-0.5px">Y: 29.4 m</div>
<div class="a" style="left:495px;top:752px;width:13px;height:13px;background:#fff;border:1px solid #555"></div>
<div class="t" style="left:512px;top:752px">Grid</div>
<div class="t" style="left:549px;top:752px">X:</div>
<div class="a" style="left:561px;top:748px;width:48px;height:21px;background:#fff;border:1px solid #e3e3e3"></div>
<div class="t" style="left:561px;top:752px;width:46px;text-align:right;padding-right:1px;color:#6d6d6d">1.0</div>
<div class="t" style="left:611px;top:752px">m</div>
<div class="t" style="left:637px;top:752px">Y:</div>
<div class="a" style="left:649px;top:748px;width:48px;height:21px;background:#fff;border:1px solid #e3e3e3"></div>
<div class="t" style="left:649px;top:752px;width:46px;text-align:right;padding-right:1px;color:#6d6d6d">1.0</div>
<div class="t" style="left:699px;top:752px">m</div>
<div class="a" style="left:725px;top:752px;width:13px;height:13px;background:#e6e6e6;border:1px solid #c5c5c5"></div>
<div class="t" style="left:741px;top:752px;color:#8d8d8d">Snap</div>

<!-- right panel -->
<div class="t" style="left:852px;top:149px;font-weight:bold;letter-spacing:-0.4px">Load Train</div>
<div class="a" style="left:810px;top:168px;width:141px;height:22px;background:linear-gradient(#f2f2f2,#e5e5e5);border:1px solid #acacac"></div>
<div class="t" style="left:814px;top:172px">Cooper-E80</div>
<svg class="a" style="left:938px;top:176px" width="9" height="7"><path d="M1 1L4.5 5L8 1" fill="none" stroke="#404040" stroke-width="1.8"/></svg>
<div class="a" style="left:809px;top:196px;width:143px;height:29px;border:1px solid #a0a0a0;box-shadow:inset 1px 1px 0 #fff, 1px 1px 0 #fff"></div>
<svg class="a" style="left:822px;top:203px" width="14" height="17" shape-rendering="crispEdges">
<path d="M0.5 0.5H8.5L12.5 4.5V15.5H0.5Z" fill="#fff" stroke="#9a9a9a"/><path d="M8.5 0.5V4.5H12.5" fill="none" stroke="#9a9a9a"/><path d="M3 6.5H10M3 9.5H10M3 12.5H10" stroke="#9a9a9a"/></svg>
<svg class="a" style="left:846px;top:202px" width="18" height="18" shape-rendering="crispEdges">
<rect x="8" y="1" width="9" height="10" fill="#8a8a8a"/><rect x="10" y="2" width="5" height="3" fill="#e6e6e6"/><rect x="11" y="7" width="3" height="3" fill="#d0d0d0"/>
<path d="M0.5 10.5H5.5L7.5 12.5V16.5H0.5Z" fill="#fff" stroke="#9a9a9a"/><path d="M2 5V9M0.5 7.5L2 9.5L3.5 7.5M2 4.5H6" fill="none" stroke="#9a9a9a"/></svg>
<svg class="a" style="left:874px;top:203px" width="14" height="17" shape-rendering="crispEdges">
<path d="M0.5 0.5H8.5L12.5 4.5V15.5H0.5Z" fill="#fff" stroke="#9a9a9a"/>
<text x="2" y="7" font-family="Liberation Sans" font-size="7" fill="#9a9a9a">a</text><text x="7" y="14" font-family="Liberation Sans" font-size="8" fill="#9a9a9a">b</text><path d="M3 9L6 12" stroke="#9a9a9a"/></svg>
<svg class="a" style="left:899px;top:205px" width="16" height="15" shape-rendering="crispEdges">
<path d="M0.5 0.5H6.5L8.5 2.5V9.5H0.5Z" fill="#fff" stroke="#9a9a9a"/><path d="M2 4H6M2 6H6M2 8H6" stroke="#9a9a9a"/>
<path d="M6.5 4.5H12.5L14.5 6.5V13.5H6.5Z" fill="#fff" stroke="#9a9a9a"/><path d="M8 8H13M8 10H13M8 12H13" stroke="#9a9a9a"/></svg>
<svg class="a" style="left:926px;top:203px" width="14" height="16" shape-rendering="crispEdges">
<path d="M0.5 0.5H9.5L12.5 3.5V14.5H0.5Z" fill="#fff" stroke="#9a9a9a"/><path d="M3 5H10M3 8H10M3 11H10" stroke="#c0c0c0"/>
<path d="M1 1L13 14M13 1L1 14" stroke="#9a9a9a" stroke-width="1.6" shape-rendering="auto"/></svg>
<div class="t" style="left:783px;top:236px">Impact factor:</div>
<div class="a" style="left:859px;top:232px;width:36px;height:21px;background:#fff;border:1px solid #d9d9d9"></div>
<div class="t" style="left:859px;top:236px;width:34px;text-align:right;color:#6d6d6d">1.00</div>
<div class="t" style="left:783px;top:263px">Length:</div>
<div class="a" style="left:825px;top:259px;width:45px;height:21px;background:#fff;border:1px solid #d9d9d9"></div>
<div class="t" style="left:825px;top:263px;width:43px;text-align:right;color:#6d6d6d">120.0</div>
<div class="t" style="left:872px;top:263px">m</div>
<div class="t" style="left:783px;top:287px">Concentrated loads:</div>
<div class="a" style="left:815px;top:303px;width:114px;height:118px;background:#fff"></div>
<div class="a" style="left:816px;top:304px;width:112px;height:21px;background:#ebebeb;box-shadow:inset 1px 1px 0 #fff"></div>
<div class="a" style="left:816px;top:304px;width:18px;height:21px;background:#ebebeb;box-shadow:inset 1px 1px 0 #fff"></div>
<div class="a" style="left:816px;top:326px;width:18px;height:18px;background:#ebebeb;box-shadow:inset 1px 1px 0 #fff"></div>
<div class="a" style="left:816px;top:345px;width:18px;height:18px;background:#ebebeb;box-shadow:inset 1px 1px 0 #fff"></div>
<div class="a" style="left:816px;top:364px;width:18px;height:18px;background:#ebebeb;box-shadow:inset 1px 1px 0 #fff"></div>
<div class="a" style="left:816px;top:383px;width:18px;height:18px;background:#ebebeb;box-shadow:inset 1px 1px 0 #fff"></div>
<div class="a" style="left:816px;top:402px;width:18px;height:18px;background:#ebebeb;box-shadow:inset 1px 1px 0 #fff"></div>
<div class="a" style="left:815px;top:303px;width:1px;height:118px;background:#646464"></div>
<div class="a" style="left:834px;top:303px;width:1px;height:118px;background:#646464"></div>
<div class="a" style="left:878px;top:303px;width:1px;height:118px;background:#646464"></div>
<div class="a" style="left:928px;top:303px;width:1px;height:118px;background:#646464"></div>
<div class="a" style="left:815px;top:303px;width:114px;height:1px;background:#646464"></div>
<div class="a" style="left:815px;top:325px;width:114px;height:1px;background:#646464"></div>
<div class="a" style="left:815px;top:344px;width:114px;height:1px;background:#646464"></div>
<div class="a" style="left:815px;top:363px;width:114px;height:1px;background:#646464"></div>
<div class="a" style="left:815px;top:382px;width:114px;height:1px;background:#646464"></div>
<div class="a" style="left:815px;top:401px;width:114px;height:1px;background:#646464"></div>
<div class="a" style="left:815px;top:420px;width:114px;height:1px;background:#646464"></div>
<div class="t" style="left:835px;top:309px;width:43px;color:#6d6d6d;text-align:center;">x[m]</div>
<div class="t" style="left:879px;top:309px;width:49px;color:#6d6d6d;text-align:center;">P[kN]</div>
<div class="t" style="left:816px;top:329px;width:18px;color:#6d6d6d;text-align:right;padding-right:4px;">1</div>
<div class="t" style="left:835px;top:329px;width:43px;color:#6d6d6d;text-align:right;padding-right:4px;">0.0</div>
<div class="t" style="left:879px;top:329px;width:49px;color:#6d6d6d;text-align:right;padding-right:4px;">-180</div>
<div class="t" style="left:816px;top:348px;width:18px;color:#6d6d6d;text-align:right;padding-right:4px;">2</div>
<div class="t" style="left:835px;top:348px;width:43px;color:#6d6d6d;text-align:right;padding-right:4px;">2.0</div>
<div class="t" style="left:879px;top:348px;width:49px;color:#6d6d6d;text-align:right;padding-right:4px;">-360</div>
<div class="t" style="left:816px;top:367px;width:18px;color:#6d6d6d;text-align:right;padding-right:4px;">3</div>
<div class="t" style="left:835px;top:367px;width:43px;color:#6d6d6d;text-align:right;padding-right:4px;">4.0</div>
<div class="t" style="left:879px;top:367px;width:49px;color:#6d6d6d;text-align:right;padding-right:4px;">-360</div>
<div class="t" style="left:816px;top:386px;width:18px;color:#6d6d6d;text-align:right;padding-right:4px;">4</div>
<div class="t" style="left:835px;top:386px;width:43px;color:#6d6d6d;text-align:right;padding-right:4px;">5.0</div>
<div class="t" style="left:879px;top:386px;width:49px;color:#6d6d6d;text-align:right;padding-right:4px;">-360</div>
<div class="t" style="left:816px;top:405px;width:18px;color:#6d6d6d;text-align:right;padding-right:4px;">5</div>
<div class="t" style="left:835px;top:405px;width:43px;color:#6d6d6d;text-align:right;padding-right:4px;">7.0</div>
<div class="t" style="left:879px;top:405px;width:49px;color:#6d6d6d;text-align:right;padding-right:4px;">-360</div>
<svg class="a" style="left:933px;top:309px" width="9" height="6"><path d="M1 5L4.5 1.5L8 5" fill="none" stroke="#606060" stroke-width="1.6"/></svg>
<div class="a" style="left:931px;top:320px;width:14px;height:47px;background:#cdcdcd"></div>
<svg class="a" style="left:933px;top:409px" width="9" height="6"><path d="M1 1L4.5 4.5L8 1" fill="none" stroke="#606060" stroke-width="1.6"/></svg>
<div class="t" style="left:783px;top:429px">Distrib. loads [kN/m]:</div>
<div class="a" style="left:783px;top:445px;width:13px;height:13px;background:#e6e6e6;border:1px solid #bcbcbc"></div>
<div class="t" style="left:799px;top:445px;color:#6d6d6d">Single load car (q)</div>
<div class="a" style="left:783px;top:461px;width:13px;height:13px;background:#e6e6e6;border:1px solid #bcbcbc"></div>
<svg class="a" style="left:785px;top:463px" width="10" height="10"><path d="M1 4.8L3.6 7.6L8.6 1.2" fill="none" stroke="#5c5c5c" stroke-width="2"/></svg>
<div class="t" style="left:799px;top:462px;color:#6d6d6d">Full/empty car (q/q')</div>
<div class="a" style="left:795px;top:478px;width:172px;height:80px;background:#fff"></div>
<div class="a" style="left:796px;top:479px;width:170px;height:21px;background:#ebebeb;box-shadow:inset 1px 1px 0 #fff"></div>
<div class="a" style="left:796px;top:479px;width:18px;height:21px;background:#ebebeb;box-shadow:inset 1px 1px 0 #fff"></div>
<div class="a" style="left:796px;top:501px;width:18px;height:18px;background:#ebebeb;box-shadow:inset 1px 1px 0 #fff"></div>
<div class="a" style="left:796px;top:520px;width:18px;height:18px;background:#ebebeb;box-shadow:inset 1px 1px 0 #fff"></div>
<div class="a" style="left:796px;top:539px;width:18px;height:18px;background:#ebebeb;box-shadow:inset 1px 1px 0 #fff"></div>
<div class="a" style="left:795px;top:478px;width:1px;height:80px;background:#646464"></div>
<div class="a" style="left:814px;top:478px;width:1px;height:80px;background:#646464"></div>
<div class="a" style="left:852px;top:478px;width:1px;height:80px;background:#646464"></div>
<div class="a" style="left:890px;top:478px;width:1px;height:80px;background:#646464"></div>
<div class="a" style="left:928px;top:478px;width:1px;height:80px;background:#646464"></div>
<div class="a" style="left:966px;top:478px;width:1px;height:80px;background:#646464"></div>
<div class="a" style="left:795px;top:478px;width:172px;height:1px;background:#646464"></div>
<div class="a" style="left:795px;top:500px;width:172px;height:1px;background:#646464"></div>
<div class="a" style="left:795px;top:519px;width:172px;height:1px;background:#646464"></div>
<div class="a" style="left:795px;top:538px;width:172px;height:1px;background:#646464"></div>
<div class="a" style="left:795px;top:557px;width:172px;height:1px;background:#646464"></div>
<div class="t" style="left:815px;top:484px;width:37px;color:#6d6d6d;text-align:center;">xa</div>
<div class="t" style="left:853px;top:484px;width:37px;color:#6d6d6d;text-align:center;">xb</div>
<div class="t" style="left:891px;top:484px;width:37px;color:#6d6d6d;text-align:center;">q</div>
<div class="t" style="left:929px;top:484px;width:37px;color:#6d6d6d;text-align:center;">q'</div>
<div class="t" style="left:796px;top:504px;width:18px;color:#6d6d6d;text-align:right;padding-right:4px;">1</div>
<div class="t" style="left:796px;top:523px;width:18px;color:#6d6d6d;text-align:right;padding-right:4px;">2</div>
<div class="t" style="left:796px;top:542px;width:18px;color:#6d6d6d;text-align:right;padding-right:4px;">3</div>
<div class="t" style="left:815px;top:504px;width:37px;color:#6d6d6d;text-align:right;padding-right:4px;">16.0</div>
<div class="t" style="left:853px;top:504px;width:37px;color:#6d6d6d;text-align:right;padding-right:4px;">120.0</div>
<div class="t" style="left:891px;top:504px;width:37px;color:#6d6d6d;text-align:right;padding-right:4px;">-12.0</div>
<div class="t" style="left:929px;top:504px;width:37px;color:#6d6d6d;text-align:center;">-2.0</div>
<div class="t" style="left:783px;top:565px">Live load [kN/m]:</div>
<div class="a" style="left:829px;top:581px;width:103px;height:38px;background:#fff"></div>
<div class="a" style="left:830px;top:582px;width:51px;height:18px;background:#ebebeb;box-shadow:inset 1px 1px 0 #fff"></div>
<div class="a" style="left:830px;top:601px;width:51px;height:17px;background:#ebebeb;box-shadow:inset 1px 1px 0 #fff"></div>
<div class="a" style="left:829px;top:581px;width:1px;height:38px;background:#646464"></div>
<div class="a" style="left:881px;top:581px;width:1px;height:38px;background:#646464"></div>
<div class="a" style="left:931px;top:581px;width:1px;height:38px;background:#646464"></div>
<div class="a" style="left:829px;top:581px;width:103px;height:1px;background:#646464"></div>
<div class="a" style="left:829px;top:600px;width:103px;height:1px;background:#646464"></div>
<div class="a" style="left:829px;top:618px;width:103px;height:1px;background:#646464"></div>
<div class="t" style="left:830px;top:584px;width:51px;color:#6d6d6d;text-align:left;">&nbsp;Exterior</div>
<div class="t" style="left:830px;top:603px;width:51px;color:#6d6d6d;text-align:left;">&nbsp;Interior</div>
<div class="t" style="left:882px;top:584px;width:49px;color:#6d6d6d;text-align:right;padding-right:4px;">0.0</div>
<div class="t" style="left:882px;top:603px;width:49px;color:#6d6d6d;text-align:right;padding-right:4px;">0.0</div>
</body></html>
